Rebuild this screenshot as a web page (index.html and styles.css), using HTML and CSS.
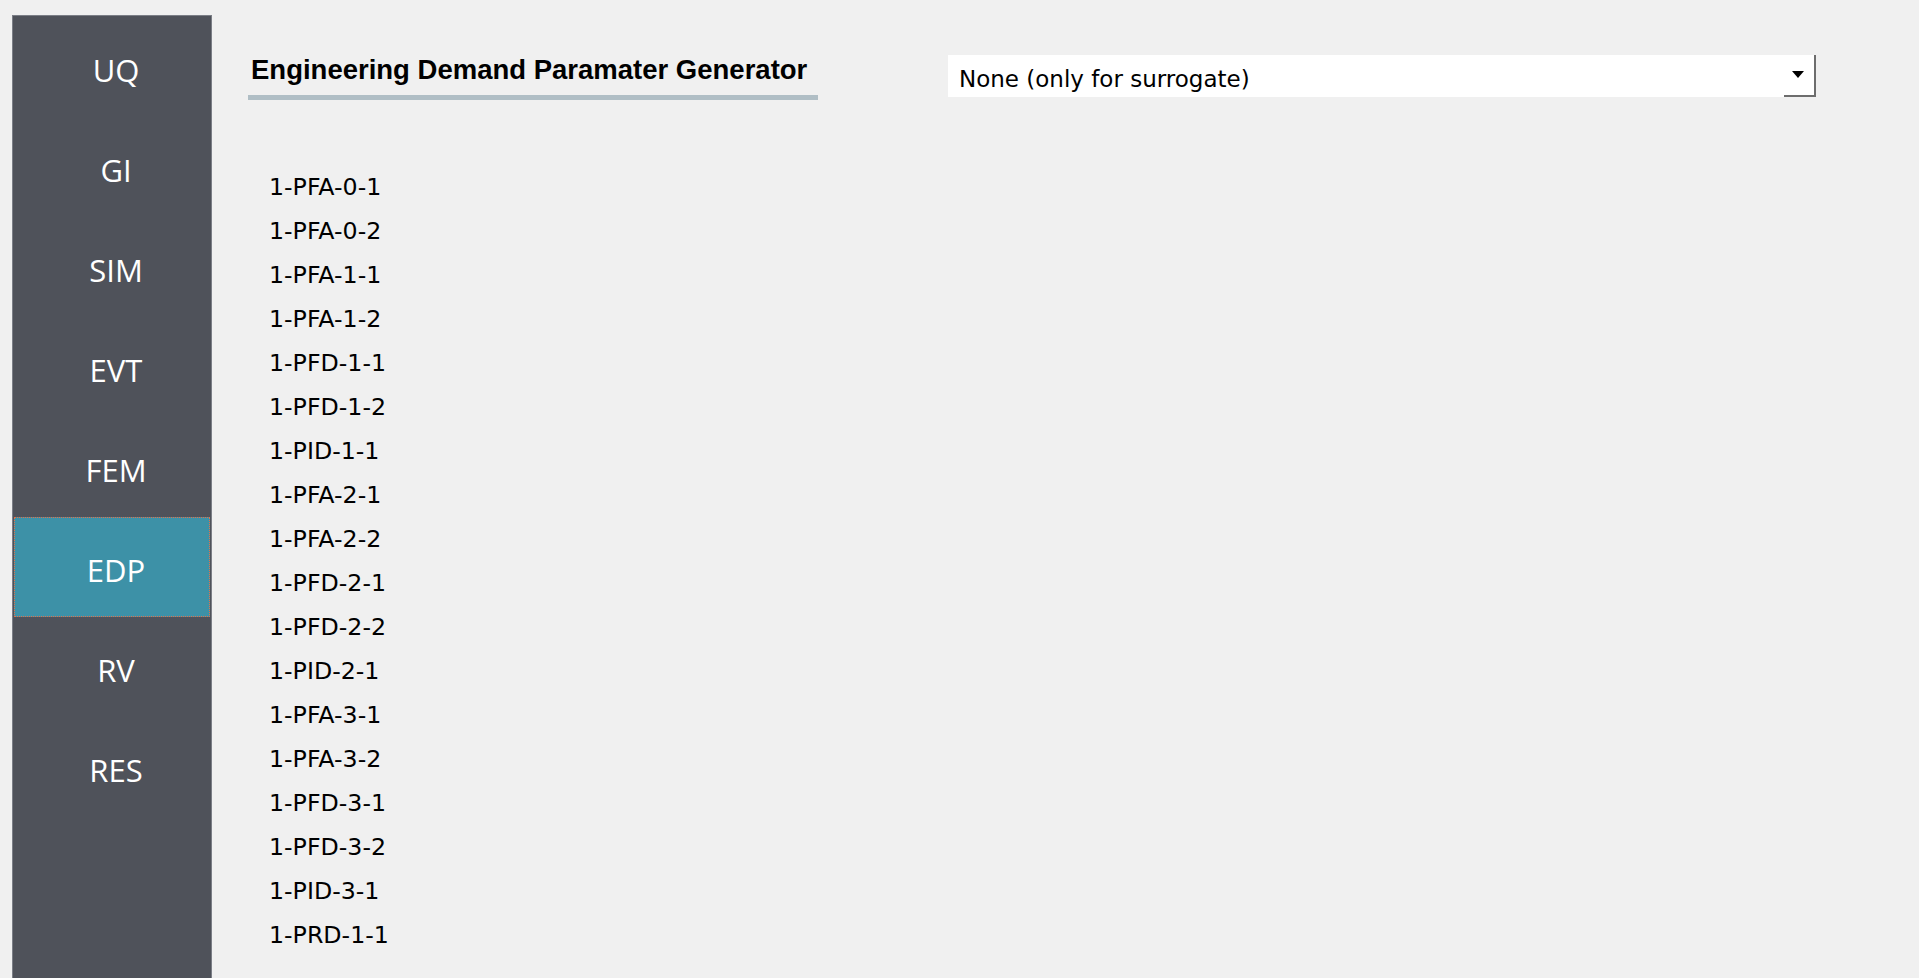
FILE: index.html
```html
<!DOCTYPE html>
<html lang="en">
<head>
<meta charset="utf-8">
<title>EDP</title>
<link rel="stylesheet" href="styles.css">
</head>
<body>
<div class="app">
  <nav class="sidebar">
    <div class="nav-item">UQ</div>
    <div class="nav-item">GI</div>
    <div class="nav-item">SIM</div>
    <div class="nav-item">EVT</div>
    <div class="nav-item">FEM</div>
    <div class="nav-item active">EDP</div>
    <div class="nav-item">RV</div>
    <div class="nav-item">RES</div>
  </nav>
  <main class="main">
    <div class="header">
      <div class="title">Engineering Demand Paramater Generator</div>
      <div class="select">
        <span class="select-text">None (only for surrogate)</span>
        <span class="select-btn"><span class="arrow"></span></span>
      </div>
    </div>
    <ul class="edp-list">
      <li>1-PFA-0-1</li>
      <li>1-PFA-0-2</li>
      <li>1-PFA-1-1</li>
      <li>1-PFA-1-2</li>
      <li>1-PFD-1-1</li>
      <li>1-PFD-1-2</li>
      <li>1-PID-1-1</li>
      <li>1-PFA-2-1</li>
      <li>1-PFA-2-2</li>
      <li>1-PFD-2-1</li>
      <li>1-PFD-2-2</li>
      <li>1-PID-2-1</li>
      <li>1-PFA-3-1</li>
      <li>1-PFA-3-2</li>
      <li>1-PFD-3-1</li>
      <li>1-PFD-3-2</li>
      <li>1-PID-3-1</li>
      <li>1-PRD-1-1</li>
    </ul>
  </main>
</div>
</body>
</html>
```

FILE: styles.css
```css
html, body {
  margin: 0;
  padding: 0;
  background: #f0f0f0;
  overflow: hidden;
  height: 100%;
}

.app {
  display: flex;
  align-items: flex-start;
  height: 100%;
}

.sidebar {
  box-sizing: border-box;
  margin: 15px 0 0 12px;
  width: 200px;
  height: calc(100vh - 15px);
  flex: none;
  background: #4f525a;
  border: 1px solid #7b7e86;
  border-bottom: none;
  padding: 1px;
  display: flex;
  flex-direction: column;
}

.nav-item {
  box-sizing: border-box;
  height: 100px;
  padding: 6px 0 0 8px;
  line-height: 94px;
  text-align: center;
  color: #ffffff;
  font-family: "Open Sans", "Noto Sans", sans-serif;
  font-size: 31px;
}

.nav-item.active {
  background: #3d91a7;
  border: 1px dotted #e0714a;
  line-height: 92px;
}

.main {
  flex: 1;
  padding-left: 36px;
}

.header {
  display: flex;
  align-items: flex-start;
  margin-top: 54px;
}

.title {
  box-sizing: border-box;
  width: 570px;
  padding: 0 0 9px 3px;
  border-bottom: 5px solid #b0bec5;
  font-family: "Liberation Sans", Arial, sans-serif;
  font-weight: bold;
  font-size: 27.5px;
  line-height: 32px;
  color: #000;
  white-space: nowrap;
}

.select {
  box-sizing: border-box;
  margin: 1px 0 0 130px;
  width: 868px;
  height: 42px;
  background: #ffffff;
  display: flex;
  align-items: flex-start;
}

.select-text {
  flex: 1;
  padding: 6px 0 0 11px;
  line-height: 36px;
  font-family: "DejaVu Sans", Verdana, sans-serif;
  font-size: 23px;
  color: #000;
  white-space: nowrap;
}

.select-btn {
  box-sizing: border-box;
  width: 32px;
  height: 42px;
  border-right: 2px solid #6d6d6d;
  border-bottom: 2px solid #6d6d6d;
  display: flex;
  justify-content: center;
  padding-top: 16px;
}

.arrow {
  width: 0;
  height: 0;
  border-left: 6px solid transparent;
  border-right: 6px solid transparent;
  border-top: 7px solid #000;
  margin-left: -3px;
}

.edp-list {
  list-style: none;
  margin: 65px 0 0 21px;
  padding: 0;
  font-family: "DejaVu Sans", Verdana, sans-serif;
  font-size: 23.7px;
  line-height: 44px;
  color: #000;
}
```
